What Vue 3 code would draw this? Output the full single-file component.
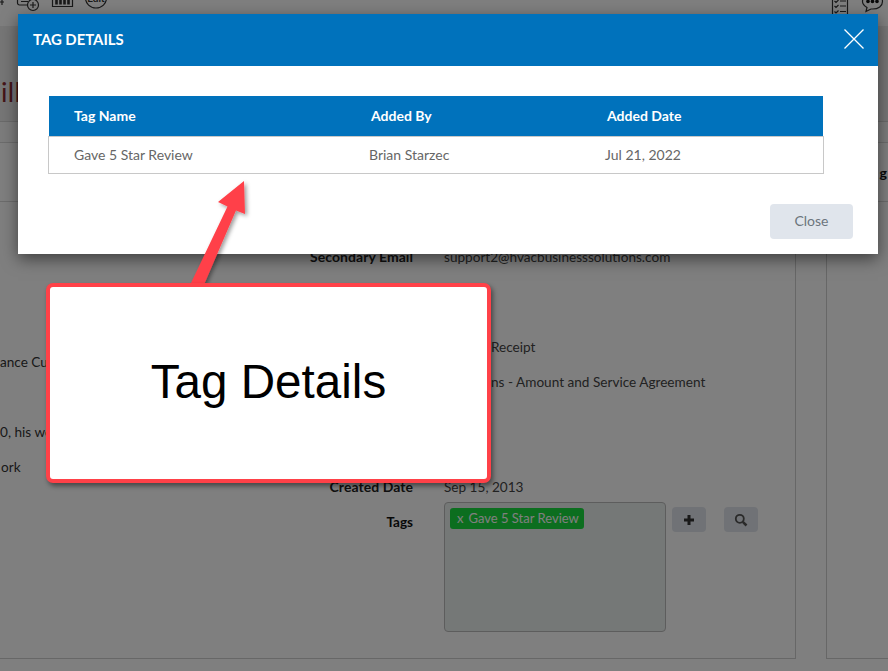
<script setup>
const columns = ['Tag Name', 'Added By', 'Added Date']
const row = ['Gave 5 Star Review', 'Brian Starzec', 'Jul 21, 2022']
</script>

<template>
  <div class="page">
    <header class="toolbar">
      <div class="tools">
        <svg class="tool" width="5" height="10" viewBox="0 0 5 10"><path d="M0 2h4M2 -1v6" /></svg>
        <svg class="tool" width="23" height="12" viewBox="0 0 23 12">
          <path d="M.5 -6V3a2 2 0 0 0 2 2H10M4 1.500h7M13 -4h-8" />
          <circle cx="16" cy="5" r="5.500" />
          <path d="M13 5h6M16 2v6" />
        </svg>
        <svg class="tool" width="21" height="8" viewBox="0 0 21 8">
          <path d="M.5 -6V6.500h20V-6" />
          <path class="thick" d="M4.500 0v4.500M8.500 0v4.500M12.500 0v4.500M16.500 0v4.500" />
        </svg>
        <svg class="tool" width="22" height="10" viewBox="0 0 22 10">
          <ellipse cx="11" cy="-2" rx="10.500" ry="10" />
          <text x="11" y="2" text-anchor="middle">Edit</text>
        </svg>
      </div>
      <div class="tools right">
        <svg class="tool" width="16" height="18" viewBox="0 0 16 18">
          <rect x=".5" y="-6" width="15" height="22" />
          <path d="M2.500 1l1.500 1.500L6.500 0M8 1h6M2.500 6l1.500 1.500L6.500 5M8 6h6M2.500 11.500l1.500 1.500 2.500-2.500M8 11.500h6" />
        </svg>
        <svg class="tool" width="21" height="13" viewBox="0 0 21 13">
          <path d="M10.500 -6c6 0 10 3 10 7.500S16.500 9 10.500 9H9l-5 2.500 1-4C2.500 6 .5 4 .5 1.500.5 -3 4.500 -6 10.500 -6z" />
          <circle class="dot" cx="6" cy="1.500" r="1.800" />
          <circle class="dot" cx="10.500" cy="1.500" r="1.800" />
          <circle class="dot" cx="15" cy="1.500" r="1.800" />
        </svg>
      </div>
    </header>

    <section class="title-band"><span class="title-text">ill</span></section>
    <div class="sub-band"></div>

    <div class="columns">
      <main class="main-panel">
        <div class="panel-head"></div>
        <div class="panel-body">
          <div class="notes">
            <p class="note first">ance Customer</p>
            <p class="note second">0, his work</p>
            <p class="note third">ork</p>
          </div>
          <div class="form">
            <div class="field email">
              <span class="label">Secondary Email</span>
              <span class="value">support2@hvacbusinesssolutions.com</span>
            </div>
            <div class="field receipt">
              <span class="label"></span>
              <span class="value indent">Receipt</span>
            </div>
            <div class="field amount">
              <span class="label"></span>
              <span class="value indent">ns - Amount and Service Agreement</span>
            </div>
            <div class="field created">
              <span class="label">Created Date</span>
              <span class="value">Sep 15, 2013</span>
            </div>
            <div class="field tags-field">
              <span class="label tags-label">Tags</span>
              <div class="tag-box">
                <span class="chip"><span class="chip-x">x</span>Gave 5 Star Review</span>
              </div>
              <button class="mini" type="button">
                <svg width="14" height="14" viewBox="0 0 14 14"><path class="plus" d="M7 2v10M2 7h10" /></svg>
              </button>
              <button class="mini" type="button">
                <svg width="14" height="14" viewBox="0 0 14 14">
                  <circle class="lens" cx="5.800" cy="5.800" r="4" />
                  <path class="lens handle" d="M8.800 8.800L12.500 12.500" />
                </svg>
              </button>
            </div>
          </div>
        </div>
      </main>
      <aside class="side-panel">
        <div class="side-head"><span class="side-title">g</span></div>
      </aside>
    </div>

    <div class="backdrop"></div>

    <div class="modal" role="dialog">
      <div class="modal-head">
        <h2 class="modal-title">TAG DETAILS</h2>
        <svg class="close-x" width="20" height="20" viewBox="0 0 20 20"><path d="M.5 .5l19 19M19.500 .5l-19 19" /></svg>
      </div>
      <div class="modal-body">
        <div class="table">
          <div class="thead">
            <span v-for="c in columns" :key="c" class="cell">{{ c }}</span>
          </div>
          <div class="tbody">
            <span v-for="c in row" :key="c" class="cell">{{ c }}</span>
          </div>
        </div>
      </div>
      <div class="modal-foot">
        <button class="close-btn" type="button">Close</button>
      </div>
    </div>

    <svg class="arrow" width="888" height="671" viewBox="0 0 888 671">
      <defs>
        <filter id="arrow-shadow" x="-30%" y="-30%" width="170%" height="170%">
          <feDropShadow dx="2" dy="2" stdDeviation="2" flood-color="#000" flood-opacity="0.4" />
        </filter>
      </defs>
      <path d="M244 181L218 202 227.500 206.500 191 283 203 287 236 210.500 245 214z" filter="url(#arrow-shadow)" />
    </svg>

    <div class="callout">Tag Details</div>
  </div>
</template>

<style>
html, body {
  margin: 0;
  background: #fff;
}
</style>

<style scoped>
.page {
  position: relative;
  width: 888px;
  height: 671px;
  overflow: hidden;
  background: #fff;
  font-family: Lato, "Noto Sans", sans-serif;
  font-size: 14px;
  color: #555;
}

/* Page behind the dialog */
.toolbar {
  height: 26px;
  display: flex;
  justify-content: space-between;
  background: #fff;
  overflow: hidden;
}
.tools {
  display: flex;
  align-items: flex-start;
  gap: 12px;
}
.tools.right {
  gap: 14px;
  padding-right: 5px;
}
.tool {
  overflow: visible;
  flex: none;
}
.tool path,
.tool rect,
.tool ellipse,
.tool circle {
  fill: none;
  stroke: #333;
  stroke-width: 1.200;
}
.tool .thick {
  stroke-width: 2.600;
}
.tool .dot {
  fill: #111;
  stroke: none;
}
.tool text {
  font-family: Lato, sans-serif;
  font-size: 10px;
  font-weight: 700;
  fill: #333;
}
.title-band {
  height: 95px;
  background: #ececec;
  border-bottom: 1px solid #d4d4d4;
  overflow: hidden;
}
.title-text {
  display: block;
  padding: 50px 0 0 1px;
  font-size: 27px;
  line-height: 32px;
  letter-spacing: 0.300px;
  color: #8a2a30;
}
.sub-band {
  height: 20px;
  background: #f8f8f8;
  border-bottom: 1px solid #d8d8d8;
}
.columns {
  display: flex;
  height: 515px;
  gap: 30px;
  background: #fff;
}
.main-panel {
  width: 795px;
  height: 515px;
  border-right: 1px solid #cfcfcf;
  border-bottom: 1px solid #cfcfcf;
  flex: none;
}
.panel-head {
  height: 58px;
  border-bottom: 1px solid #d8d8d8;
}
.panel-body {
  display: flex;
}
.notes {
  width: 250px;
  flex: none;
}
.note {
  margin: 0;
  font-size: 13.600px;
  line-height: 20px;
  color: #333;
  white-space: nowrap;
}
.note.first { margin-top: 150px; }
.note.second { margin-top: 50px; }
.note.third { margin-top: 15px; padding-left: 1px; }
.form {
  flex: 1;
}
.field {
  display: flex;
  line-height: 20px;
}
.label {
  width: 163px;
  flex: none;
  margin-right: 31px;
  text-align: right;
  font-weight: 700;
  letter-spacing: 0.050px;
  color: #222;
  white-space: nowrap;
}
.value {
  font-size: 13.600px;
  color: #444;
  white-space: nowrap;
}
.indent {
  padding-left: 47px;
}
.email { margin-top: 45px; }
.receipt { margin-top: 70px; }
.amount { margin-top: 15px; }
.created { margin-top: 85px; }
.tags-field { margin-top: 5px; }
.tags-label {
  padding-top: 10px;
  font-size: 13.500px;
  letter-spacing: 0;
  color: #111;
}
.tag-box {
  width: 210px;
  height: 118px;
  margin-right: 6px;
  border: 1px solid #bbb;
  border-radius: 4px;
  background: #eaf0ee;
  padding: 5px;
  flex: none;
}
.chip {
  display: inline-flex;
  height: 21px;
  align-items: center;
  padding: 0 5px 0 7px;
  border-radius: 3px;
  background: #19dc3e;
  color: #fff;
  font-size: 13px;
  line-height: 21px;
}
.chip-x {
  margin-right: 5px;
}
.mini {
  width: 34px;
  height: 25px;
  margin-top: 5px;
  margin-right: 18px;
  padding: 0;
  display: flex;
  align-items: center;
  justify-content: center;
  border: 0;
  border-radius: 4px;
  background: #e0e5ec;
}
.plus {
  fill: none;
  stroke: #333;
  stroke-width: 3;
}
.lens {
  fill: none;
  stroke: #555;
  stroke-width: 1.800;
}
.handle {
  stroke-width: 2.500;
}
.side-panel {
  flex: 1;
  height: 515px;
  border-left: 1px solid #cfcfcf;
  border-bottom: 1px solid #cfcfcf;
}
.side-head {
  height: 58px;
  border-bottom: 1px solid #d8d8d8;
  display: flex;
  justify-content: flex-end;
  align-items: center;
}
.side-title {
  font-weight: 700;
  color: #111;
  padding-right: 1px;
}

/* Dialog layer */
.backdrop {
  position: absolute;
  inset: 0;
  background: rgba(0, 0, 0, 0.5);
}
.modal {
  position: absolute;
  left: 18px;
  top: 14px;
  width: 860px;
  height: 240px;
  display: flex;
  flex-direction: column;
  background: #fff;
  box-shadow: 0 5px 15px rgba(0, 0, 0, 0.5);
}
.modal-head {
  height: 52px;
  flex: none;
  display: flex;
  align-items: center;
  justify-content: space-between;
  padding: 0 14px 0 15px;
  background: #0072bc;
  color: #fff;
}
.modal-title {
  margin: 0 0 2px;
  font-size: 14.900px;
  font-weight: 700;
  line-height: 20px;
}
.close-x {
  margin-bottom: 2px;
}
.close-x path {
  fill: none;
  stroke: #fff;
  stroke-width: 1.300;
}
.modal-body {
  flex: 1;
  padding: 30px 30px 0 30px;
}
.table {
  width: 776px;
}
.thead,
.tbody {
  display: grid;
  align-items: center;
  box-sizing: border-box;
}
.thead {
  height: 40px;
  margin: 0 1px;
  padding: 0 0 2px 25px;
  grid-template-columns: 297px 236px 1fr;
  background: #0072bc;
  color: #fff;
  font-weight: 700;
}
.tbody {
  height: 38px;
  padding: 0 0 2px 25px;
  border: 1px solid #c8c8c8;
  color: #666;
  grid-template-columns: 295px 236px 1fr;
}
.modal-foot {
  display: flex;
  justify-content: flex-end;
  padding: 0 25px 15px 0;
}
.close-btn {
  width: 83px;
  height: 35px;
  padding: 0 0 2px;
  border: 0;
  border-radius: 4px;
  background: #e0e5ec;
  color: #6c757d;
  font-family: inherit;
  font-size: 14px;
}

/* Annotation */
.arrow {
  position: absolute;
  left: 0;
  top: 0;
  pointer-events: none;
}
.arrow path {
  fill: #ff4148;
}
.callout {
  position: absolute;
  left: 46px;
  top: 283px;
  width: 445px;
  height: 200px;
  box-sizing: border-box;
  display: flex;
  align-items: center;
  justify-content: center;
  padding-bottom: 4px;
  border: 4px solid #ff4148;
  border-radius: 7px;
  background: #fff;
  box-shadow: 2px 3px 5px rgba(0, 0, 0, 0.45);
  font-family: "Liberation Sans", Arial, sans-serif;
  font-size: 47.600px;
  color: #000;
}
</style>
